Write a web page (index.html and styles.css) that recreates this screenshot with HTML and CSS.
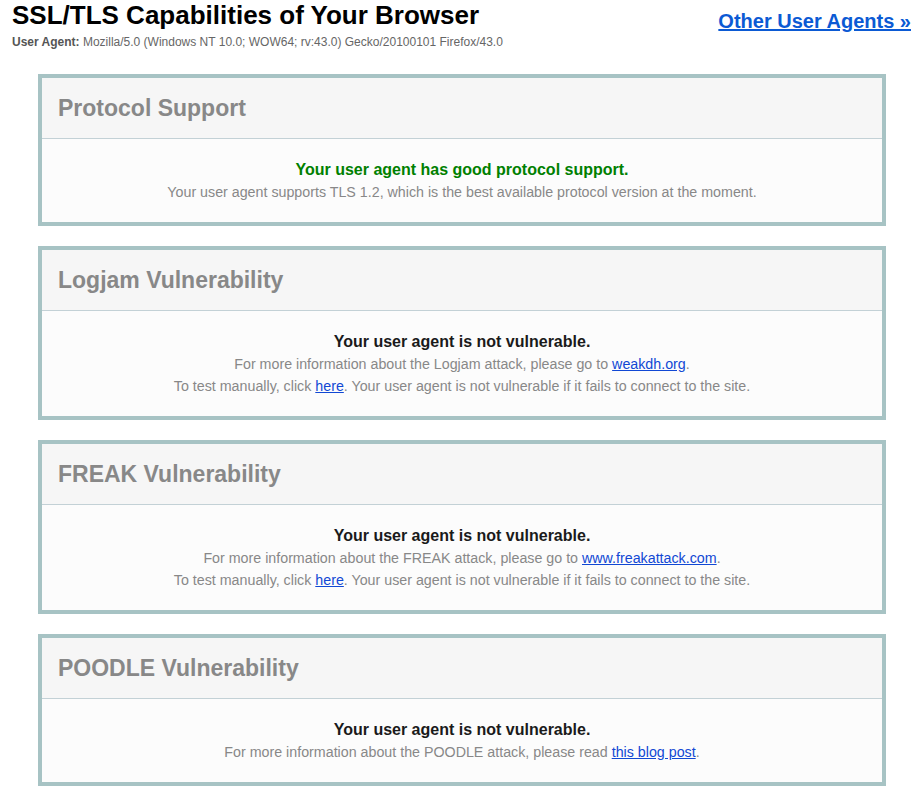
FILE: index.html
```html
<!DOCTYPE html>
<html>
<head>
<meta charset="utf-8">
<link rel="stylesheet" href="styles.css">
</head>
<body>
<div class="top">
  <div class="ident">
    <h1 class="title">SSL/TLS Capabilities of Your Browser</h1>
    <div class="ua"><b>User Agent:</b> Mozilla/5.0 (Windows NT 10.0; WOW64; rv:43.0) Gecko/20100101 Firefox/43.0</div>
  </div>
  <a class="other" href="#">Other User Agents »</a>
</div>

<div class="cards">
  <section class="card">
    <h2 class="card-head">Protocol Support</h2>
    <div class="card-body">
      <div class="verdict good">Your user agent has good protocol support.</div>
      <div class="note">Your user agent supports TLS 1.2, which is the best available protocol version at the moment.</div>
    </div>
  </section>

  <section class="card">
    <h2 class="card-head">Logjam Vulnerability</h2>
    <div class="card-body">
      <div class="verdict">Your user agent is not vulnerable.</div>
      <div class="note">For more information about the Logjam attack, please go to <a href="#">weakdh.org</a>.</div>
      <div class="note">To test manually, click <a href="#">here</a>. Your user agent is not vulnerable if it fails to connect to the site.</div>
    </div>
  </section>

  <section class="card">
    <h2 class="card-head">FREAK Vulnerability</h2>
    <div class="card-body">
      <div class="verdict">Your user agent is not vulnerable.</div>
      <div class="note">For more information about the FREAK attack, please go to <a href="#">www.freakattack.com</a>.</div>
      <div class="note">To test manually, click <a href="#">here</a>. Your user agent is not vulnerable if it fails to connect to the site.</div>
    </div>
  </section>

  <section class="card">
    <h2 class="card-head">POODLE Vulnerability</h2>
    <div class="card-body">
      <div class="verdict">Your user agent is not vulnerable.</div>
      <div class="note">For more information about the POODLE attack, please read <a href="#">this blog post</a>.</div>
    </div>
  </section>
</div>
</body>
</html>
```

FILE: styles.css
```css
html, body {
  margin: 0;
  padding: 0;
  background: #ffffff;
}
body {
  font-family: "Liberation Sans", Arial, sans-serif;
  color: #222222;
}
.top {
  display: flex;
  justify-content: space-between;
  align-items: flex-start;
  padding: 0 13px 0 12px;
}
.title {
  margin: 0;
  padding-top: 0;
  font-size: 26px;
  line-height: 30px;
  font-weight: bold;
  color: #000000;
}
.ua {
  margin-top: 5px;
  font-size: 12px;
  line-height: 14px;
  color: #666666;
}
.ua b {
  color: #555555;
}
.other {
  margin-top: 9px;
  font-size: 20px;
  line-height: 24px;
  font-weight: bold;
  color: #0b5ad4;
  text-decoration: underline;
}
.cards {
  display: flex;
  flex-direction: column;
  gap: 20px;
  margin: 25px 38px 0 38px;
}
.card {
  border: 4px solid #a7c3c4;
  background: #fcfcfc;
}
.card-head {
  margin: 0;
  height: 61px;
  padding: 1px 16px 0 16px;
  box-sizing: border-box;
  display: flex;
  align-items: center;
  background: #f6f6f6;
  border-bottom: 1px solid #c3d1d6;
  font-size: 23px;
  font-weight: bold;
  color: #888888;
}
.card-body {
  padding: 20px 16px 19px 16px;
  text-align: center;
}
.verdict {
  font-size: 16px;
  line-height: 22px;
  font-weight: bold;
  color: #1a1a1a;
}
.verdict.good {
  color: #008000;
}
.note {
  font-size: 14.25px;
  line-height: 22px;
  color: #888888;
}
.note a {
  color: #1148d4;
  text-decoration: underline;
}
```
